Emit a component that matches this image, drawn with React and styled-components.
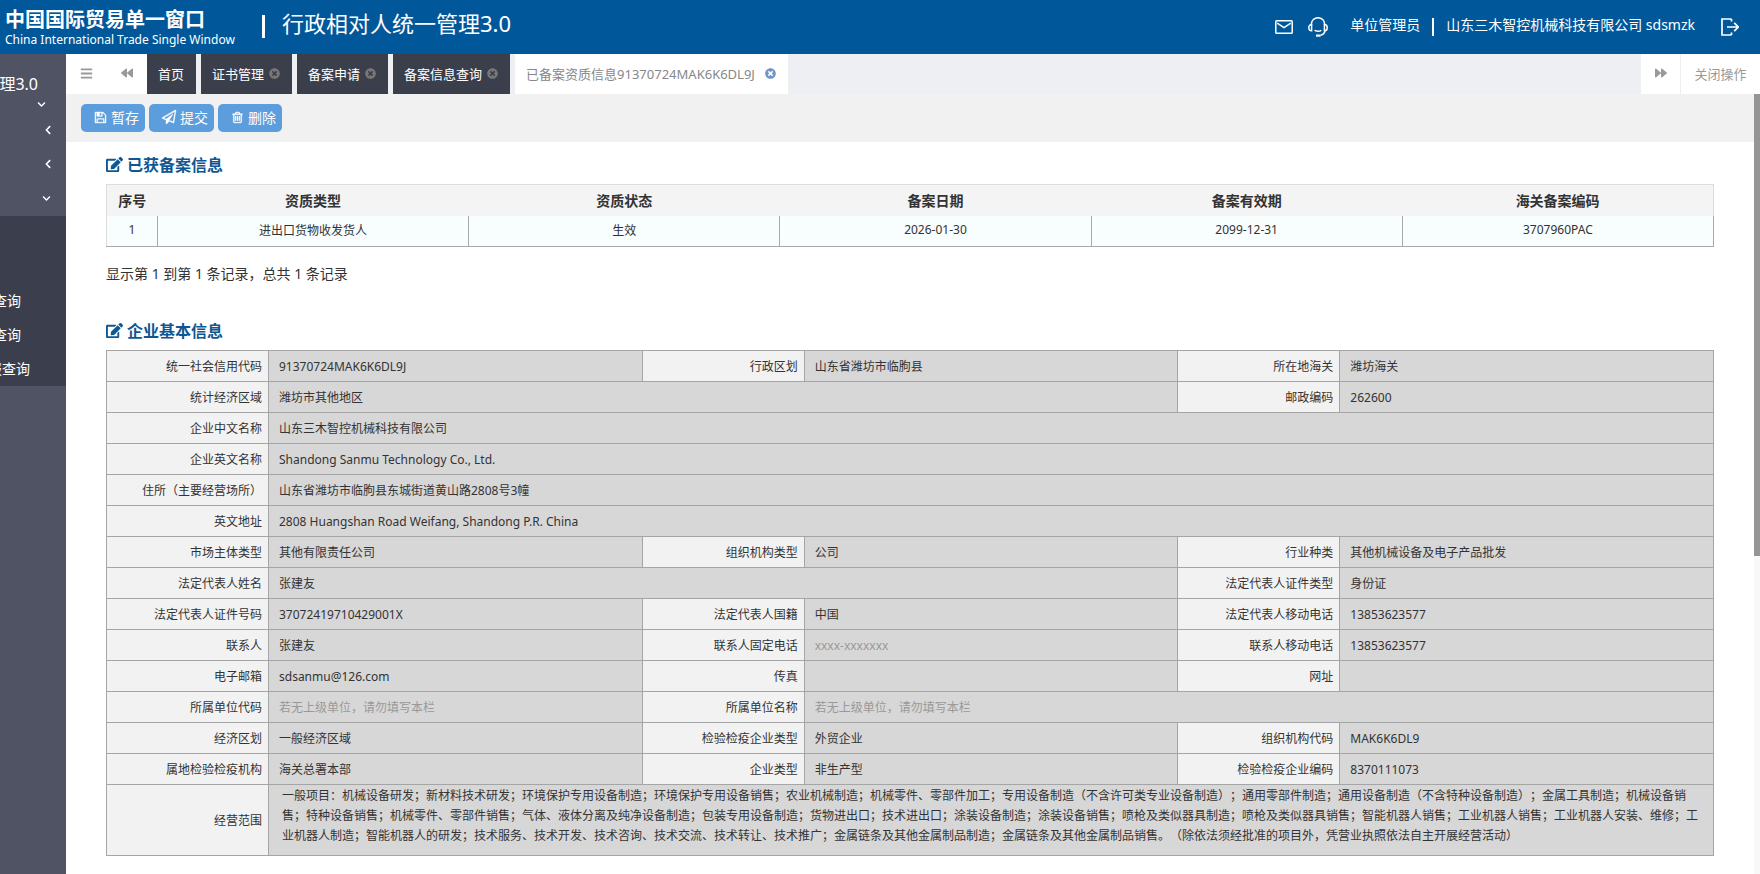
import React from "react";
import styled, { createGlobalStyle } from "styled-components";
import {
  FaBars,
  FaBackward,
  FaForward,
  FaTimesCircle,
  FaChevronDown,
  FaChevronLeft,
  FaEdit,
} from "react-icons/fa";

const GlobalStyle = createGlobalStyle`
  * {
    box-sizing: border-box;
  }

  body {
    margin: 0;
    font-family: "Noto Sans", "Noto Sans CJK SC", sans-serif;
    font-size: 12px;
    color: #333;
    background-color: white;
    text-spacing-trim: space-all;
  }

  button, input, textarea {
    font-family: inherit;
  }
`;

const Page = styled.div`
  display: flex;
  flex-direction: column;
  min-height: 100vh;
`;

// HEADER

const Header = styled.header`
  display: flex;
  align-items: center;
  justify-content: space-between;
  height: 54px;
  padding: 0 21px 0 5px;
  color: white;
  background-color: #00589b;
  white-space: nowrap;
`;

const Brand = styled.div`
  display: flex;
  align-items: center;
  padding-bottom: 2px;
`;

const Logo = styled.div`
  width: 257px;
  padding-top: 4px;
`;

const LogoCn = styled.div`
  font-size: 20px;
  line-height: 24px;
  font-weight: 700;
`;

const LogoEn = styled.div`
  font-size: 12px;
  line-height: 16px;
`;

const Divider = styled.span`
  width: ${(props) => props.$width}px;
  height: ${(props) => props.$height}px;
  background-color: white;
`;

const AppTitle = styled.h1`
  margin: 0 0 6px 17px;
  font-size: 22px;
  line-height: 28px;
  font-weight: 400;
`;

const UserArea = styled.div`
  display: flex;
  align-items: center;
  gap: 12px;
  font-size: 14px;
`;

const UserText = styled.span`
  padding-bottom: 6px;
`;

const IconButton = styled.button`
  display: flex;
  align-items: center;
  padding: 0;
  margin: 0 ${(props) => props.$right || 0}px 0 ${(props) => props.$left || 0}px;
  border: 0;
  color: inherit;
  background-color: transparent;
  cursor: pointer;
`;

// SIDEBAR

const Body = styled.div`
  display: flex;
  flex: 1;
`;

const Sidebar = styled.nav`
  flex: none;
  width: 66px;
  padding-top: 18px;
  overflow: hidden;
  color: white;
  background-color: #4f5364;
`;

const SideTitle = styled.div`
  display: flex;
  justify-content: flex-end;
  padding-right: 28px;
  font-size: 16px;
  line-height: 24px;
  white-space: nowrap;
`;

const SideToggle = styled.button`
  display: flex;
  align-items: center;
  justify-content: flex-end;
  width: 100%;
  height: ${(props) => props.$height}px;
  padding: 0 ${(props) => props.$right}px 0 0;
  border: 0;
  color: inherit;
  background-color: transparent;
`;

const SubMenu = styled.div`
  margin-top: 1px;
  padding-top: 68px;
  background-color: #3b3f4d;
`;

const SubItem = styled.a`
  display: flex;
  justify-content: flex-end;
  padding-right: ${(props) => props.$right}px;
  font-size: 14px;
  line-height: 34px;
  color: white;
  text-decoration: none;
  white-space: nowrap;
`;

// TABS

const Main = styled.main`
  flex: 1;
  min-width: 0;
  display: flex;
  flex-direction: column;
`;

const TabBar = styled.div`
  display: flex;
  justify-content: space-between;
  height: 40px;
  background-color: #eeeff3;
`;

const TabGroup = styled.div`
  display: flex;
`;

const BarButton = styled.button`
  display: flex;
  align-items: center;
  justify-content: center;
  width: ${(props) => props.$width}px;
  padding: 0 0 2px;
  border: 0;
  border-left: ${(props) => (props.$line ? "1px solid #eee" : "0")};
  font-size: 13px;
  color: #999;
  background-color: white;
`;

const Tabs = styled.div`
  display: flex;
  gap: 5px;
`;

const Tab = styled.a`
  display: flex;
  align-items: center;
  justify-content: space-between;
  gap: 5px;
  min-width: ${(props) => (props.$active ? 273 : 0)}px;
  padding: 0 12px 2px 11px;
  font-size: 13px;
  color: ${(props) => (props.$active ? "#888" : "white")};
  background-color: ${(props) => (props.$active ? "white" : "#3b3e4b")};
  text-decoration: none;
  white-space: nowrap;

  svg {
    color: ${(props) => (props.$active ? "#7096c8" : "#777")};
  }
`;

const Scroller = styled.div`
  display: flex;
  flex: 1;
`;

const Content = styled.div`
  flex: 1;
  min-width: 0;
`;

const ScrollTrack = styled.div`
  flex: none;
  width: 6px;
  background-color: #f8f8f8;
`;

const ScrollThumb = styled.div`
  height: 462px;
  background-color: #959598;
`;

const Toolbar = styled.div`
  display: flex;
  gap: 4px;
  padding: 10px 15px;
  background-color: #f1f1f1;
`;

const ToolButton = styled.button`
  display: flex;
  align-items: center;
  gap: 4px;
  height: 28px;
  padding: 0 6px 2px 13px;
  border: 0;
  border-radius: 5px;
  font-size: 14px;
  color: white;
  background-color: #5c9ddd;
  cursor: pointer;
`;

// SECTIONS

const Sections = styled.div`
  padding: 10px 40px 19px;
`;

const SectionTitle = styled.h2`
  display: flex;
  align-items: center;
  gap: 4px;
  height: 24px;
  margin: 0 0 8px;
  font-size: 16px;
  font-weight: 700;
  color: #0f5793;
`;

const RecordTable = styled.table`
  width: 100%;
  table-layout: fixed;
  border-collapse: collapse;
  border: 1px solid #ddd;
  border-bottom: 1px solid #a5a9ac;

  th {
    height: 31px;
    padding: 0 0 1px;
    font-size: 14px;
    font-weight: 700;
    background-color: #f4f4f4;
  }

  td {
    height: 31px;
    padding: 0 0 2px;
    text-align: center;
    background-color: #f8fdfe;
    border-right: 1px solid #a5a9ac;
  }
`;

const Summary = styled.p`
  margin: 16px 0 33px;
  font-size: 14px;
  line-height: 22px;
`;

const InfoTable = styled.table`
  width: 100%;
  table-layout: fixed;
  border-collapse: collapse;
`;

const LabelCol = styled.col`
  width: 162px;
`;

const LabelCell = styled.th`
  height: 31px;
  padding: 0 6px 0 0;
  font-weight: 400;
  text-align: right;
  white-space: nowrap;
  background-color: #f2f2f2;
  border: 1px solid #a5a5a5;
`;

const ValueCell = styled.td`
  height: 31px;
  padding: 0 0 0 10px;
  background-color: #d7d7d7;
  border: 1px solid #a5a5a5;
`;

const ScopeCell = styled(ValueCell)`
  padding: 0;
`;

const Field = styled.input`
  display: block;
  width: 100%;
  height: 28px;
  padding: 0;
  border: 0;
  outline: none;
  font-size: 12px;
  color: #333;
  background-color: transparent;

  &::placeholder {
    color: #999;
  }
`;

const ScopeField = styled.textarea`
  display: block;
  width: 100%;
  height: 70px;
  padding: 1px 13px 0;
  border: 0;
  outline: none;
  resize: none;
  overflow: hidden;
  font-size: 12px;
  line-height: 20px;
  color: #333;
  background-color: transparent;
`;

// ICONS

const glyphs = {
  save: "M512 1536h768v-384h-768v384zm896 0h128v-896q0-14-10-38.5t-20-34.5l-281-281q-10-10-34-20t-39-10v416q0 40-28 68t-68 28h-576q-40 0-68-28t-28-68v-416h-128v1280h128v-416q0-40 28-68t68-28h832q40 0 68 28t28 68v416zm-384-928v-320q0-13-9.5-22.5t-22.5-9.5h-192q-13 0-22.5 9.5t-9.5 22.5v320q0 13 9.5 22.5t22.5 9.5h192q13 0 22.5-9.5t9.5-22.5zm640 32v928q0 40-28 68t-68 28h-1344q-40 0-68-28t-28-68v-1344q0-40 28-68t68-28h928q40 0 88 20t76 48l280 280q28 28 48 76t20 88z",
  send: "M1764 11q33 24 27 64l-256 1536q-5 29-32 45-14 8-31 8-11 0-24-5l-527-215-298 327q-18 21-47 21-14 0-23-4-19-7-30-23.5t-11-36.5v-452l-472-193q-37-14-40-55-3-39 32-59l1664-960q35-21 68 2zm-342 1499l221-1323-1434 827 336 137 863-639-478 797z",
  trash: "M704 736v576q0 14-9 23t-23 9h-64q-14 0-23-9t-9-23v-576q0-14 9-23t23-9h64q14 0 23 9t9 23zm256 0v576q0 14-9 23t-23 9h-64q-14 0-23-9t-9-23v-576q0-14 9-23t23-9h64q14 0 23 9t9 23zm256 0v576q0 14-9 23t-23 9h-64q-14 0-23-9t-9-23v-576q0-14 9-23t23-9h64q14 0 23 9t9 23zm128 724v-948h-896v948q0 22 7 40.5t14.5 27 10.5 8.5h832q3 0 10.5-8.5t14.5-27 7-40.5zm-672-1076h448l-48-117q-7-9-17-11h-317q-10 2-17 11zm928 32v64q0 14-9 23t-23 9h-96v948q0 83-47 143.5t-113 60.5h-832q-66 0-113-58.5t-47-141.5v-952h-96q-14 0-23-9t-9-23v-64q0-14 9-23t23-9h309l70-167q15-37 54-63t79-26h320q40 0 79 26t54 63l70 167h309q14 0 23 9t9 23z",
};

function Glyph({ name, size }) {
  return (
    <svg
      width={size}
      height={size}
      viewBox="0 0 1792 1792"
      fill="currentColor"
      stroke="currentColor"
      strokeWidth="50"
      overflow="visible"
    >
      <path d={glyphs[name]} />
    </svg>
  );
}

function MailIcon() {
  return (
    <svg width="18" height="14" viewBox="0 0 18 14" fill="none" stroke="white" strokeWidth="1.5">
      <rect x="0.8" y="0.8" width="16.4" height="12.4" rx="0.8" />
      <path d="M2.2 3.2L9 7.6l6.8-4.4" />
    </svg>
  );
}

function HeadsetIcon() {
  return (
    <svg width="20" height="20" viewBox="0 0 20 20" fill="none" stroke="white" strokeWidth="1.5">
      <path d="M3.4 8V7a6.6 6.3 0 0 1 13.2 0v1" />
      <path d="M3.6 7.6v6.2C1.8 13.8.8 12.5.8 10.7s1-3.1 2.800-3.100zM16.400 7.600v6.200c1.800 0 2.800-1.300 2.800-3.100s-1-3.100-2.800-3.100z" />
      <path d="M6.600 13.200c1 1.500 5.400 1.500 6.600 0M17 13.600c-.4 2.600-1.800 4-4.400 4.600" />
      <path d="M8 18.600h4.600" strokeWidth="2.200" />
    </svg>
  );
}

function LogoutIcon() {
  return (
    <svg width="18" height="18" viewBox="0 0 18 18" fill="none" stroke="white" strokeWidth="1.7">
      <path d="M10.500 1H1v16h9.500M10.500 1v2.600M10.500 17v-2.600M6 9h11M13.200 4.800L17.200 9l-4 4.200" />
    </svg>
  );
}

// DATA

const tabs = [
  { title: "首页" },
  { title: "证书管理", closable: true },
  { title: "备案申请", closable: true },
  { title: "备案信息查询", closable: true },
  { title: "已备案资质信息91370724MAK6K6DL9J", closable: true, active: true },
];

const records = [
  ["1", "进出口货物收发货人", "生效", "2026-01-30", "2099-12-31", "3707960PAC"],
];

const recordHeads = ["序号", "资质类型", "资质状态", "备案日期", "备案有效期", "海关备案编码"];

const noParent = "若无上级单位，请勿填写本栏";

// one array per row: label, value, colSpan of the value, placeholder
const rows = [
  [
    ["统一社会信用代码", "91370724MAK6K6DL9J"],
    ["行政区划", "山东省潍坊市临朐县"],
    ["所在地海关", "潍坊海关"],
  ],
  [
    ["统计经济区域", "潍坊市其他地区", 3],
    ["邮政编码", "262600"],
  ],
  [["企业中文名称", "山东三木智控机械科技有限公司", 5]],
  [["企业英文名称", "Shandong Sanmu Technology Co., Ltd.", 5]],
  [["住所（主要经营场所）", "山东省潍坊市临朐县东城街道黄山路2808号3幢", 5]],
  [["英文地址", "2808 Huangshan Road Weifang, Shandong P.R. China", 5]],
  [
    ["市场主体类型", "其他有限责任公司"],
    ["组织机构类型", "公司"],
    ["行业种类", "其他机械设备及电子产品批发"],
  ],
  [
    ["法定代表人姓名", "张建友", 3],
    ["法定代表人证件类型", "身份证"],
  ],
  [
    ["法定代表人证件号码", "37072419710429001X"],
    ["法定代表人国籍", "中国"],
    ["法定代表人移动电话", "13853623577"],
  ],
  [
    ["联系人", "张建友"],
    ["联系人固定电话", "", 1, "xxxx-xxxxxxx"],
    ["联系人移动电话", "13853623577"],
  ],
  [
    ["电子邮箱", "sdsanmu@126.com"],
    ["传真", ""],
    ["网址", ""],
  ],
  [
    ["所属单位代码", "", 1, noParent],
    ["所属单位名称", "", 3, noParent],
  ],
  [
    ["经济区划", "一般经济区域"],
    ["检验检疫企业类型", "外贸企业"],
    ["组织机构代码", "MAK6K6DL9"],
  ],
  [
    ["属地检验检疫机构", "海关总署本部"],
    ["企业类型", "非生产型"],
    ["检验检疫企业编码", "8370111073"],
  ],
];

const scope =
  "一般项目：机械设备研发；新材料技术研发；环境保护专用设备制造；环境保护专用设备销售；农业机械制造；机械零件、零部件加工；专用设备制造（不含许可类专业设备制造）；通用零部件制造；通用设备制造（不含特种设备制造）；金属工具制造；机械设备销售；特种设备销售；机械零件、零部件销售；气体、液体分离及纯净设备制造；包装专用设备制造；货物进出口；技术进出口；涂装设备制造；涂装设备销售；喷枪及类似器具制造；喷枪及类似器具销售；智能机器人销售；工业机器人销售；工业机器人安装、维修；工业机器人制造；智能机器人的研发；技术服务、技术开发、技术咨询、技术交流、技术转让、技术推广；金属链条及其他金属制品制造；金属链条及其他金属制品销售。（除依法须经批准的项目外，凭营业执照依法自主开展经营活动）";

function InfoField({ id, label, value, span = 1, placeholder }) {
  return (
    <>
      <LabelCell scope="row">
        <label htmlFor={id}>{label}</label>
      </LabelCell>
      <ValueCell colSpan={span}>
        <Field id={id} defaultValue={value} placeholder={placeholder} readOnly />
      </ValueCell>
    </>
  );
}

function App() {
  return (
    <Page>
      <GlobalStyle />
      <Header>
        <Brand>
          <Logo>
            <LogoCn>中国国际贸易单一窗口</LogoCn>
            <LogoEn>China International Trade Single Window</LogoEn>
          </Logo>
          <Divider $width={3} $height={23} />
          <AppTitle>行政相对人统一管理3.0</AppTitle>
        </Brand>
        <UserArea>
          <IconButton $right={3} aria-label="消息">
            <MailIcon />
          </IconButton>
          <IconButton $right={10} aria-label="客服">
            <HeadsetIcon />
          </IconButton>
          <UserText>单位管理员</UserText>
          <Divider $width={2} $height={18} />
          <UserText>山东三木智控机械科技有限公司 sdsmzk</UserText>
          <IconButton $left={14} aria-label="退出">
            <LogoutIcon />
          </IconButton>
        </UserArea>
      </Header>
      <Body>
        <Sidebar>
          <SideTitle>理3.0</SideTitle>
          <SideToggle $height={17} $right={20} aria-label="用户">
            <FaChevronDown size={9} />
          </SideToggle>
          <SideToggle $height={34} $right={13} aria-label="菜单一">
            <FaChevronLeft size={10} />
          </SideToggle>
          <SideToggle $height={34} $right={13} aria-label="菜单二">
            <FaChevronLeft size={10} />
          </SideToggle>
          <SideToggle $height={34} $right={15} aria-label="菜单三">
            <FaChevronDown size={9} />
          </SideToggle>
          <SubMenu>
            <SubItem href="#" $right={45}>查询</SubItem>
            <SubItem href="#" $right={45}>查询</SubItem>
            <SubItem href="#" $right={36}>报查询</SubItem>
          </SubMenu>
        </Sidebar>
        <Main>
          <TabBar>
            <TabGroup>
              <BarButton $width={41} aria-label="折叠菜单">
                <FaBars size={13} />
              </BarButton>
              <BarButton $width={40} aria-label="向左">
                <FaBackward size={12} />
              </BarButton>
              <Tabs>
                {tabs.map((tab) => (
                  <Tab key={tab.title} href="#" $active={tab.active}>
                    {tab.title}
                    {tab.closable && <FaTimesCircle size={11} />}
                  </Tab>
                ))}
              </Tabs>
            </TabGroup>
            <TabGroup>
              <BarButton $width={39} aria-label="向右">
                <FaForward size={12} />
              </BarButton>
              <BarButton $width={80} $line>
                关闭操作
              </BarButton>
            </TabGroup>
          </TabBar>
          <Scroller>
            <Content>
              <Toolbar>
                <ToolButton>
                  <Glyph name="save" size={13} />
                  暂存
                </ToolButton>
                <ToolButton>
                  <Glyph name="send" size={14} />
                  提交
                </ToolButton>
                <ToolButton>
                  <Glyph name="trash" size={13} />
                  删除
                </ToolButton>
              </Toolbar>
              <Sections>
                <SectionTitle>
                  <FaEdit size={17} />
                  已获备案信息
                </SectionTitle>
                <RecordTable>
                  <colgroup>
                    <col width="51" />
                  </colgroup>
                  <thead>
                    <tr>
                      {recordHeads.map((head) => (
                        <th key={head}>{head}</th>
                      ))}
                    </tr>
                  </thead>
                  <tbody>
                    {records.map((record) => (
                      <tr key={record[0]}>
                        {record.map((cell, index) => (
                          <td key={index}>{cell}</td>
                        ))}
                      </tr>
                    ))}
                  </tbody>
                </RecordTable>
                <Summary>显示第 1 到第 1 条记录，总共 1 条记录</Summary>
                <SectionTitle>
                  <FaEdit size={17} />
                  企业基本信息
                </SectionTitle>
                <InfoTable>
                  <colgroup>
                    <LabelCol />
                    <col />
                    <LabelCol />
                    <col />
                    <LabelCol />
                    <col />
                  </colgroup>
                  <tbody>
                    {rows.map((row, rowIndex) => (
                      <tr key={rowIndex}>
                        {row.map(([label, value, span, placeholder], index) => (
                          <InfoField
                            key={label}
                            id={`field-${rowIndex}-${index}`}
                            label={label}
                            value={value}
                            span={span}
                            placeholder={placeholder}
                          />
                        ))}
                      </tr>
                    ))}
                    <tr>
                      <LabelCell scope="row">
                        <label htmlFor="scope">经营范围</label>
                      </LabelCell>
                      <ScopeCell colSpan={5}>
                        <ScopeField id="scope" defaultValue={scope} readOnly />
                      </ScopeCell>
                    </tr>
                  </tbody>
                </InfoTable>
              </Sections>
            </Content>
            <ScrollTrack>
              <ScrollThumb />
            </ScrollTrack>
          </Scroller>
        </Main>
      </Body>
    </Page>
  );
}

export default App;
